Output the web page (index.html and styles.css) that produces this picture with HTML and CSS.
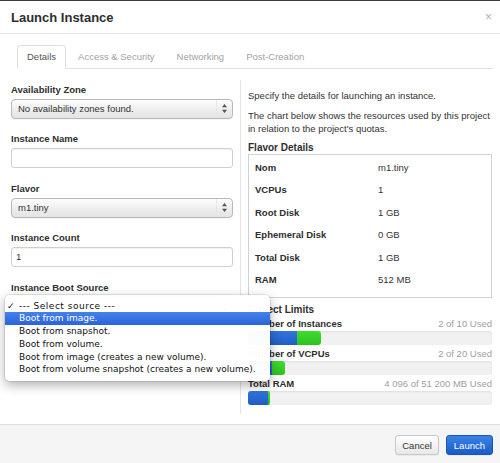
FILE: index.html
```html
<!DOCTYPE html>
<html>
<head>
<meta charset="utf-8">
<title>Launch Instance</title>
<link rel="stylesheet" href="styles.css">
</head>
<body>
<div class="modal">
  <div class="header">
    <h3 class="title">Launch Instance</h3>
    <span class="close">×</span>
  </div>
  <ul class="tabs">
    <li class="tab active">Details</li>
    <li class="tab">Access &amp; Security</li>
    <li class="tab">Networking</li>
    <li class="tab">Post-Creation</li>
  </ul>
  <div class="body">
    <div class="left">
      <div class="group">
        <label class="label">Availability Zone</label>
        <div class="select"><span>No availability zones found.</span><span class="arrows"><svg width="5" height="9" viewBox="0 0 5 9"><path d="M2.5 0 L5 3.2 L0 3.2 Z M2.5 9 L5 5.8 L0 5.8 Z" fill="#555"/></svg></span></div>
      </div>
      <div class="group">
        <label class="label">Instance Name</label>
        <div class="input"></div>
      </div>
      <div class="group">
        <label class="label">Flavor</label>
        <div class="select"><span>m1.tiny</span><span class="arrows"><svg width="5" height="9" viewBox="0 0 5 9"><path d="M2.5 0 L5 3.2 L0 3.2 Z M2.5 9 L5 5.8 L0 5.8 Z" fill="#555"/></svg></span></div>
      </div>
      <div class="group">
        <label class="label">Instance Count</label>
        <div class="input">1</div>
      </div>
      <div class="group">
        <label class="label">Instance Boot Source</label>
        <div class="select focus"><span class="hidden-val">--- Select source ---</span><span class="arrows"><svg width="5" height="9" viewBox="0 0 5 9"><path d="M2.5 0 L5 3.2 L0 3.2 Z M2.5 9 L5 5.8 L0 5.8 Z" fill="#555"/></svg></span></div>
      </div>
    </div>
    <div class="right">
      <p class="text first">Specify the details for launching an instance.</p>
      <p class="text">The chart below shows the resources used by this project in relation to the project's quotas.</p>
      <h4 class="heading">Flavor Details</h4>
      <div class="flavor">
        <div class="row"><span class="key">Nom</span><span class="val">m1.tiny</span></div>
        <div class="row"><span class="key">VCPUs</span><span class="val">1</span></div>
        <div class="row"><span class="key">Root Disk</span><span class="val">1 GB</span></div>
        <div class="row"><span class="key">Ephemeral Disk</span><span class="val">0 GB</span></div>
        <div class="row"><span class="key">Total Disk</span><span class="val">1 GB</span></div>
        <div class="row"><span class="key">RAM</span><span class="val">512 MB</span></div>
      </div>
      <h4 class="heading limits">Project Limits</h4>
      <div class="limit">
        <div class="limit-head"><span class="key">Number of Instances</span><span class="used">2 of 10 Used</span></div>
        <div class="bar"><span class="fill used-fill" style="width:20%"></span><span class="fill add-fill" style="width:10%"></span></div>
      </div>
      <div class="limit">
        <div class="limit-head"><span class="key">Number of VCPUs</span><span class="used">2 of 20 Used</span></div>
        <div class="bar"><span class="fill used-fill" style="width:10%"></span><span class="fill add-fill" style="width:5%"></span></div>
      </div>
      <div class="limit">
        <div class="limit-head"><span class="key">Total RAM</span><span class="used">4 096 of 51 200 MB Used</span></div>
        <div class="bar"><span class="fill used-fill" style="width:8%"></span><span class="fill add-fill" style="width:1%"></span></div>
      </div>
    </div>
  </div>
  <div class="footer">
    <button class="btn">Cancel</button>
    <button class="btn primary">Launch</button>
  </div>
</div>
<ul class="menu">
  <li class="item checked"><span class="check">✓</span><span class="wide">--- Select source ---</span></li>
  <li class="item hl">Boot from image.</li>
  <li class="item">Boot from snapshot.</li>
  <li class="item">Boot from volume.</li>
  <li class="item">Boot from image (creates a new volume).</li>
  <li class="item">Boot from volume snapshot (creates a new volume).</li>
</ul>
</body>
</html>
```
FILE: styles.css
```css
html, body {
  margin: 0;
  padding: 0;
}
body {
  width: 500px;
  height: 463px;
  overflow: hidden;
  position: relative;
  background: #fff;
  color: #333;
  font-family: "Liberation Sans", Arial, sans-serif;
  font-size: 9.5px;
}
.modal {
  height: 463px;
  box-sizing: border-box;
  border-top: 1px solid #3a3a3a;
  display: flex;
  flex-direction: column;
}
.header {
  height: 32px;
  display: flex;
  align-items: center;
  justify-content: space-between;
  padding: 0 8px 0 11px;
  border-bottom: 1px solid #e8e8e8;
}
.title {
  margin: 0;
  font-size: 13px;
  font-weight: bold;
  color: #2e2e2e;
}
.close {
  color: #b0b0b0;
  font-size: 12px;
}
.tabs {
  list-style: none;
  margin: 11px 7px 0 17px;
  padding: 0;
  height: 23px;
  display: flex;
  border-bottom: 1px solid #e0e0e0;
}
.tab {
  height: 24px;
  box-sizing: border-box;
  line-height: 22px;
  padding: 0 9px;
  margin-right: 2px;
  color: #a3a3a3;
  border: 1px solid transparent;
  border-bottom: 0;
  border-radius: 4px 4px 0 0;
}
.tab.active {
  color: #555;
  background: #fff;
  border-color: #e0e0e0;
  border-bottom: 1px solid #fff;
}
.body {
  flex: 1;
  display: flex;
  margin: 11px 0 10px;
  padding: 0 8px 0 11px;
}
.left {
  width: 222px;
  padding-top: 2.5px;
}
.right {
  flex: 1;
  margin-left: 7px;
  padding-left: 7px;
  border-left: 1px solid #e6e6e6;
}
.group {
  margin-bottom: 13.5px;
}
.label {
  display: block;
  font-weight: bold;
  line-height: 13px;
  margin-bottom: 3px;
  color: #2e2e2e;
}
.select {
  position: relative;
  height: 20px;
  box-sizing: border-box;
  border: 1px solid #b8b8b8;
  border-radius: 4px;
  background: linear-gradient(#fdfdfd, #ececec 60%, #e4e4e4);
  box-shadow: 0 1px 0 rgba(0,0,0,0.04);
  padding-left: 6px;
  line-height: 18px;
  color: #333;
}
.select.focus {
  box-shadow: 0 0 2px 1px rgba(90,150,230,0.55);
}
.hidden-val {
  visibility: hidden;
}
.arrows {
  position: absolute;
  top: 0;
  right: 0;
  width: 15px;
  height: 18px;
  display: flex;
  align-items: center;
  justify-content: center;
  border-left: 1px solid #e6e6e6;
}
.arrows svg {
  display: block;
}
.input {
  height: 20px;
  box-sizing: border-box;
  border: 1px solid #cfcfcf;
  border-radius: 3px;
  background: #fff;
  box-shadow: inset 0 1px 1px rgba(0,0,0,0.06);
  padding-left: 4px;
  line-height: 18px;
  color: #333;
}
.text {
  margin: 7px 0 0;
  line-height: 13px;
  color: #333;
}
.text.first {
  margin-top: 0;
  padding-top: 8.5px;
}
.heading {
  margin: 6px 0 0;
  font-size: 10px;
  font-weight: bold;
  line-height: 13px;
  color: #2e2e2e;
}
.heading.limits {
  margin-top: 5.5px;
  margin-bottom: 1px;
}
.flavor {
  border: 1px solid #d2d2d2;
  padding: 1.5px 0 5px;
  margin-top: 0.5px;
}
.row {
  display: flex;
  height: 22.5px;
  line-height: 22.5px;
  padding-left: 6px;
}
.key {
  font-weight: bold;
  color: #2e2e2e;
}
.row .key {
  width: 123px;
}
.val {
  color: #333;
}
.limit-head {
  display: flex;
  justify-content: space-between;
  line-height: 13px;
}
.used {
  color: #a0a0a0;
}
.bar {
  display: flex;
  height: 14px;
  margin: 0.5px 0 2.5px;
  background: #f1f1f1;
  border-radius: 3px;
  box-shadow: inset 0 1px 2px rgba(0,0,0,0.08);
  overflow: hidden;
}
.fill {
  display: block;
  height: 100%;
}
.used-fill {
  background: linear-gradient(#3275dc, #1f5cc6);
}
.add-fill {
  background: linear-gradient(#3fdc2f, #2cc21d);
  border-radius: 0 3px 3px 0;
}
.footer {
  display: flex;
  justify-content: flex-end;
  align-items: flex-start;
  gap: 7px;
  padding: 10px 7px 0;
  box-sizing: border-box;
  height: 39px;
  border-top: 1px solid #e2e2e2;
  background: #f5f5f5;
}
.btn {
  height: 20px;
  margin: 0;
  padding: 0 6px;
  font-family: "Liberation Sans", Arial, sans-serif;
  font-size: 9.5px;
  color: #333;
  border: 1px solid #c8c8c8;
  border-radius: 3px;
  background: linear-gradient(#ffffff, #e8e8e8);
  box-shadow: 0 1px 1px rgba(0,0,0,0.05);
}
.btn.primary {
  color: #fff;
  border-color: #1b55b8;
  background: linear-gradient(#3a83e6, #1a5bc8);
  padding: 0 7px;
}
.menu {
  position: absolute;
  left: 5px;
  top: 295px;
  width: 265px;
  margin: 0;
  padding: 4.5px 0;
  list-style: none;
  background: rgba(255,255,255,0.98);
  border-radius: 5px;
  box-shadow: 0 4px 12px rgba(0,0,0,0.32), 0 0 0 1px rgba(0,0,0,0.08);
  font-family: "DejaVu Sans", "Liberation Sans", sans-serif;
  font-size: 9px;
  color: #111;
}
.item {
  height: 12.8px;
  line-height: 12.8px;
  padding-left: 14px;
  white-space: nowrap;
}
.item.checked {
  padding-left: 2px;
}
.check {
  display: inline-block;
  width: 12px;
}
.wide {
  letter-spacing: 0.5px;
}
.item.hl {
  color: #fff;
  background: linear-gradient(#4382ea, #2c63d8);
}
```
